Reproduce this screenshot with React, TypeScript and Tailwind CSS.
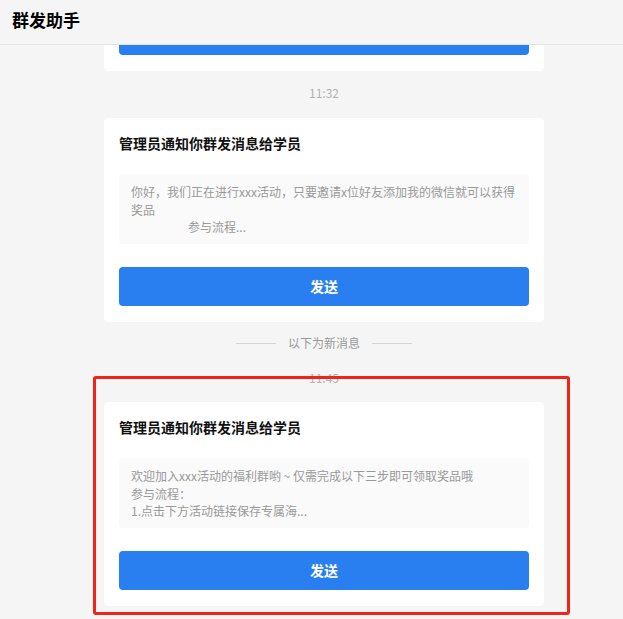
import React from "react";

const FONT = { fontFamily: '"Noto Sans CJK SC", "Noto Sans", sans-serif' };

function Card({ children, bare }: { children?: React.ReactNode; bare?: boolean }) {
  return (
    <div className="w-[440px] bg-white rounded-[4px] px-[15px] pt-[15px] pb-[16px] flex flex-col">
      <div className="text-[14px] leading-[20px] font-bold text-[#111] h-[20px]">
        {bare ? null : "管理员通知你群发消息给学员"}
      </div>
      <div className="mt-[21px] bg-[#fafafa] rounded-[4px] px-3 py-[9px] text-[12px] leading-[17.5px] text-[#999] h-[70px] overflow-hidden">
        {children}
      </div>
      <button className="block mt-[23px] h-[39px] w-full bg-[#2a7ff0] rounded-[4px] text-white text-[14px] font-bold">
        {bare ? null : "发送"}
      </button>
    </div>
  );
}

function Stamp({ t, cls }: { t: string; cls: string }) {
  return <div className={"text-center text-[12px] leading-[18px] text-[#b2b2b2] " + cls}>{t}</div>;
}

export default function App() {
  return (
    <div className="w-full h-[619px] bg-[#f5f5f5] flex flex-col overflow-hidden" style={FONT}>
      <div className="h-[45px] shrink-0 border-b border-[#e4e4e4] px-3 pb-[4px] flex items-center text-[17px] font-bold text-black">
        群发助手
      </div>
      <div className="flex-1 overflow-hidden">
        <div className="ml-[104px] w-[440px] -mt-[178px] flex flex-col">
          <Card bare />
          <Stamp t="11:32" cls="pt-[13px] pb-[16px]" />
          <Card>
            你好，我们正在进行xxx活动，只要邀请x位好友添加我的微信就可以获得
            <br />
            奖品
            <div className="pl-[57px]">参与流程...</div>
          </Card>
          <div className="pt-[12px] h-[30px] flex items-center justify-center gap-3">
            <div className="w-[40px] h-px bg-[#d4d4d4]" />
            <span className="text-[12px] leading-[18px] text-[#999]">以下为新消息</span>
            <div className="w-[40px] h-px bg-[#d4d4d4]" />
          </div>
          <div className="relative">
            <Stamp t="11:45" cls="pt-[17px] pb-[15px]" />
            <Card>
              欢迎加入xxx活动的福利群哟 ~ 仅需完成以下三步即可领取奖品哦
              <br />
              参与流程：
              <br />
              1.点击下方活动链接保存专属海...
            </Card>
            <div className="absolute top-[24px] -left-[11px] w-[477px] h-[239px] border-[3px] border-[#f2231b] rounded-[3px] pointer-events-none" />
          </div>
        </div>
      </div>
    </div>
  );
}
